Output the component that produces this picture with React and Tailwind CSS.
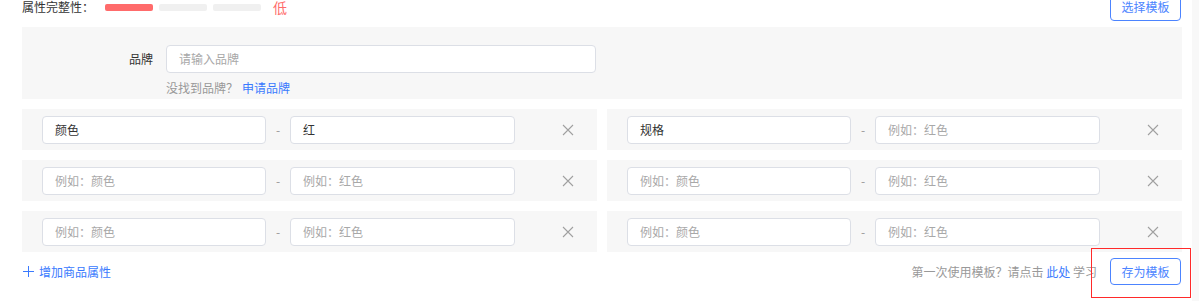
import React from 'react';

const font = { fontFamily: '"Noto Sans CJK SC", "Noto Sans", sans-serif' };

function CloseIcon() {
  return (
    <svg width="12" height="12" viewBox="0 0 12 12" className="text-[#a0a0a0]">
      <path d="M1 1 L11 11 M11 1 L1 11" stroke="currentColor" strokeWidth="1.1" fill="none" />
    </svg>
  );
}

function Field({ value, placeholder, className }) {
  return (
    <div
      className={`h-[28px] bg-white border border-[#dcdfe6] rounded-[4px] flex items-center px-[12px] text-[12px] ${className}`}
    >
      {value ? (
        <span className="text-[#333]">{value}</span>
      ) : (
        <span className="text-[#a8a8a8]">{placeholder}</span>
      )}
    </div>
  );
}

function AttrRow({ name, val }) {
  return (
    <div className="w-[575px] h-[41px] bg-[#f7f7f7] flex items-center pl-[20px] pt-px">
      <Field value={name} placeholder="例如：颜色" className="w-[224px]" />
      <div className="w-[24px] text-center text-[12px] text-[#999]">-</div>
      <Field value={val} placeholder="例如：红色" className="w-[225px]" />
      <div className="w-[47px]" />
      <CloseIcon />
    </div>
  );
}

const rows = [
  [{ name: '颜色', val: '红' }, { name: '规格', val: '' }],
  [{ name: '', val: '' }, { name: '', val: '' }],
  [{ name: '', val: '' }, { name: '', val: '' }],
];

export default function App() {
  return (
    <div className="w-[1199px] h-[301px] overflow-hidden bg-white flex relative" style={font}>
      <div className="w-[1192px] pl-[22px] pr-[10px]">
        <div className="-mt-[7px] h-[28px] flex items-center">
          <span className="text-[12px] leading-[14px] text-[#333] w-[83px]">属性完整性：</span>
          <div className="flex gap-[6px] items-center">
            <div className="w-[48px] h-[7px] rounded-[2px] bg-[#ff6b6b]" />
            <div className="w-[48px] h-[7px] rounded-[2px] bg-[#f0f0f0]" />
            <div className="w-[48px] h-[7px] rounded-[2px] bg-[#f0f0f0]" />
          </div>
          <span className="ml-[12px] text-[14px] leading-[14px] text-[#ff6b6b]">低</span>
          <div className="flex-1" />
          <button className="w-[71px] h-[28px] border border-[#4c84ff] rounded-[4px] text-[12px] leading-[14px] text-[#4c84ff] bg-white mr-[1px]">
            选择模板
          </button>
        </div>

        <div className="mt-[6px] h-[72px] bg-[#f7f7f7] pt-[18px]">
          <div className="flex items-center">
            <span className="w-[132px] text-right text-[12px] text-[#333] pr-px">品牌</span>
            <div className="ml-[12px] w-[430px] h-[28px] bg-white border border-[#dcdfe6] rounded-[4px] flex items-center px-[12px] text-[12px] text-[#a8a8a8]">
              请输入品牌
            </div>
          </div>
          <div className="ml-[144px] mt-[6px] text-[12px] text-[#999]">
            没找到品牌？<span className="ml-[4px] text-[#3a7afe]">申请品牌</span>
          </div>
        </div>

        <div className="mt-[10px] flex flex-col gap-[10px]">
          {rows.map((r, i) => (
            <div key={i} className="flex gap-[10px]">
              <AttrRow {...r[0]} />
              <AttrRow {...r[1]} />
            </div>
          ))}
        </div>

        <div className="mt-[6px] flex items-center h-[27px]">
          <svg width="11" height="11" viewBox="0 0 11 11" className="text-[#3a7afe] ml-px">
            <path d="M5.5 0 V11 M0 5.5 H11" stroke="currentColor" strokeWidth="1" fill="none" />
          </svg>
          <span className="ml-[5px] text-[12px] text-[#3a7afe]">增加商品属性</span>
          <div className="flex-1" />
          <span className="text-[12px] text-[#999]">
            第一次使用模板？请点击 <span className="text-[#3a7afe]">此处</span> 学习
          </span>
          <button className="ml-[13px] w-[71px] h-[27px] border border-[#4c84ff] rounded-[4px] text-[12px] text-[#4c84ff] bg-white mr-[1px]">
            存为模板
          </button>
        </div>
      </div>
      <div className="w-[7px] bg-[#f8f8f8]" />
      <div className="absolute left-[1091px] top-[248px] w-[100px] h-[50px] border border-[#ff2a2a]" />
    </div>
  );
}
